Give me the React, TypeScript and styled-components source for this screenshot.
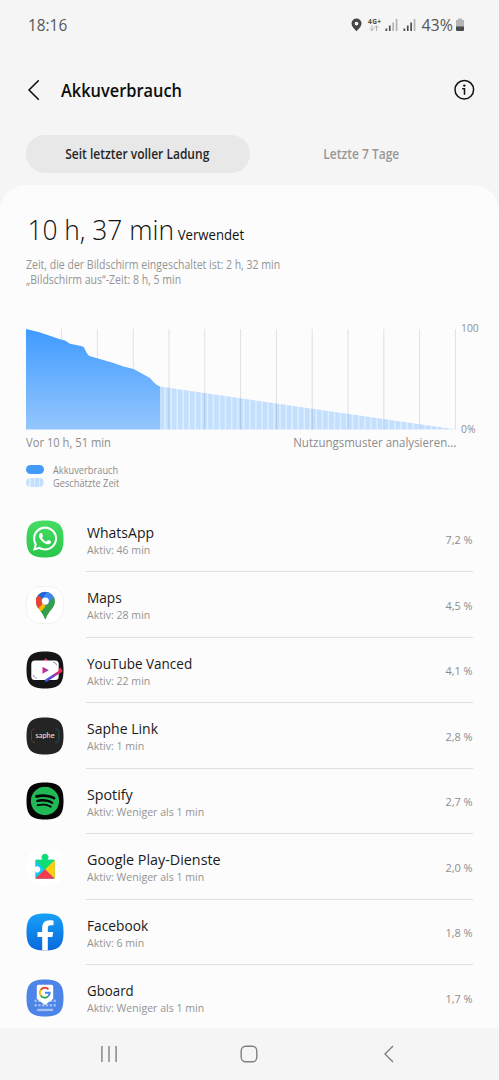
import React from "react";
import styled, { createGlobalStyle, css } from "styled-components";
import { FaSpotify, FaWhatsapp } from "react-icons/fa";

const GlobalStyle = createGlobalStyle`
  * { box-sizing: border-box; }
  body {
    margin: 0;
    background: #f5f5f5;
    font-family: "Open Sans", "Noto Sans", sans-serif;
    color: #1c1c1c;
  }
  svg { display: block; flex: none; }
`;

/* Condenses the typeface horizontally, anchored at the given edge. */
const narrow = (ratio: number, origin = "left") => css`
  transform: scaleX(${ratio});
  transform-origin: ${origin};
`;

const Screen = styled.div`
  width: 499px;
  height: 1080px;
  display: flex;
  flex-direction: column;
  overflow: hidden;
  background: #f5f5f5;
`;

const StatusBar = styled.header`
  height: 49px;
  flex: none;
  display: flex;
  align-items: center;
  justify-content: space-between;
  padding: 0 34px 0 28px;
  font-size: 16px;
  color: #555;
`;

const Clock = styled.span`
  ${narrow(0.96)}
`;

const StatusIcons = styled.div`
  display: flex;
  align-items: center;
`;

const Level = styled.span`
  margin: 0 2px 0 3px;
`;

const TitleBar = styled.div`
  height: 82px;
  flex: none;
  display: flex;
  align-items: center;
  padding: 0 24px 0 27px;
`;

const Title = styled.h1`
  flex: 1;
  margin: -2px 0 0 20px;
  font-size: 18.5px;
  font-weight: 600;
  color: #0c0c0c;
  ${narrow(0.885)}
`;

const Tabs = styled.nav`
  height: 54px;
  flex: none;
  display: flex;
  align-items: flex-start;
  padding: 4px 26px 0;
`;

const Tab = styled.button<{ $active?: boolean }>`
  flex: 1;
  height: 38px;
  border: 0;
  border-radius: 19px;
  padding: 0 1px 0 0;
  font-family: inherit;
  font-size: 13.5px;
  font-weight: 600;
  background: ${(p) => (p.$active ? "#e8e8e8" : "transparent")};
  color: ${(p) => (p.$active ? "#262626" : "#989898")};
`;

const TabLabel = styled.span`
  display: block;
  ${narrow(0.89, "center")}
`;

const Card = styled.main`
  flex: 1;
  min-height: 0;
  overflow: hidden;
  border-radius: 26px 26px 0 0;
  background: #fcfcfc;
  padding: 24px 26px 0;
`;

const Total = styled.div`
  display: flex;
  align-items: baseline;
  height: 43px;
  padding-left: 1.5px;
  line-height: 40px;
  font-size: 28px;
  font-weight: 300;
  color: #101010;
  ${narrow(0.94)}
`;

const Used = styled.span`
  margin-left: 4px;
  font-size: 14px;
  font-weight: 400;
`;

const Details = styled.p`
  margin: 5px 0 1px;
  font-size: 12px;
  line-height: 15px;
  white-space: nowrap;
  color: #949494;
  ${narrow(0.876)}
`;

const ChartRow = styled.div`
  display: flex;
  margin-top: 42px;
`;

const Axis = styled.div`
  display: flex;
  flex-direction: column;
  justify-content: space-between;
  height: 117px;
  margin: -9px 0 -7px 5px;
  font-size: 11.5px;
  line-height: 16px;
  color: #8f8f8f;
  ${narrow(0.9)}
`;

const RangeLabels = styled.div`
  display: flex;
  justify-content: space-between;
  width: 430px;
  margin-top: 4px;
  font-size: 12.5px;
  line-height: 18px;
  color: #8c8c8c;
`;

const RangeStart = styled.span`
  ${narrow(0.895)}
`;

const RangeEnd = styled.span`
  ${narrow(0.92, "right")}
`;

const Legend = styled.div`
  display: flex;
  flex-direction: column;
  margin-top: 11px;
`;

const LegendItem = styled.div`
  display: flex;
  align-items: center;
  gap: 9px;
  height: 13px;
`;

const LegendLabel = styled.span`
  font-size: 10px;
  color: #8c8c8c;
  ${narrow(0.925)}
`;

const Swatch = styled.i<{ $estimated?: boolean }>`
  width: 17.5px;
  height: 9px;
  border-radius: 4.5px;
  background: ${(p) =>
    p.$estimated
      ? "repeating-linear-gradient(90deg, #c3dfff 0 3.4px, #deeeff 3.4px 4.6px)"
      : "#429bfa"};
`;

const AppList = styled.ul`
  list-style: none;
  margin: 17.5px 0 0;
  padding: 0;
`;

const AppRow = styled.li`
  display: flex;
  align-items: center;
  height: 65.5px;
`;

const AppBody = styled.div`
  flex: 1;
  align-self: stretch;
  display: flex;
  align-items: center;
  justify-content: space-between;
  margin-left: 22px;
  padding: 2px 0 0 0.6px;
  border-bottom: 1px solid #dfdfdf;
`;

const AppName = styled.div<{ $ratio: number }>`
  font-size: 15px;
  line-height: 19px;
  color: #1a1a1a;
  ${(p) => narrow(p.$ratio)}
`;

const AppTime = styled.div`
  font-size: 11.5px;
  line-height: 15px;
  color: #949494;
  ${narrow(0.92)}
`;

const Share = styled.div`
  font-size: 11.5px;
  color: #8c8c8c;
  ${narrow(0.95, "right")}
`;

const NavBar = styled.footer`
  height: 52px;
  flex: none;
  display: grid;
  grid-template-columns: repeat(3, 140px);
  justify-content: center;
  align-items: center;
  justify-items: center;
  padding-right: 2px;
  background: #f5f5f5;
`;

const Signal = ({ bars }: { bars: number }) => (
  <svg width="18" height="14" viewBox="0 0 18 14">
    {[2.5, 5.5, 8.5, 12].map((h, i) => (
      <rect key={h} x={3.5 + i * 3.4} y={13 - h} width="1.7" height={h} fill={i < bars ? "#4c4c4c" : "#b4b4b4"} />
    ))}
  </svg>
);

const SQUIRCLE = "M18.5 0C32.5 0 37 4.5 37 18.5S32.5 37 18.5 37 0 32.5 0 18.5 4.5 0 18.5 0Z";

const Tile = ({ fill, stroke, children }: { fill: string; stroke?: string; children?: React.ReactNode }) => (
  <svg width="38" height="38" viewBox="-0.5 -0.5 38 38">
    <path d={SQUIRCLE} fill={fill} stroke={stroke} strokeWidth="0.8" />
    {children}
  </svg>
);

const WhatsAppIcon = () => (
  <Tile fill="url(#wa)">
    <defs>
      <linearGradient id="wa" x2="0" y2="1">
        <stop stopColor="#46dd63" />
        <stop offset="1" stopColor="#29c64c" />
      </linearGradient>
    </defs>
    <FaWhatsapp x="4.8" y="4.4" size={27.5} color="#fff" />
  </Tile>
);

const MapsIcon = () => (
  <Tile fill="#fff" stroke="#eeeeee">
    <clipPath id="pin">
      <path d="M18.8 5.3a9.4 9.4 0 0 1 9.4 9.4c0 4.8-2.6 7.2-5.2 10.5-1.8 2.4-2.9 4.2-3.4 6.6-.3 1.3-1.3 1.3-1.6 0-.5-2.4-1.6-4.2-3.4-6.6-2.6-3.3-5.2-5.7-5.2-10.5a9.4 9.4 0 0 1 9.4-9.4Z" />
    </clipPath>
    <g clipPath="url(#pin)">
      <path fill="#34a04c" d="M8 4h22v30H8z" />
      <path fill="#fbbc04" d="M8 19.5 18.8 14.5 22 17.3 12.8 27.5 8 25z" />
      <path fill="#e94335" d="M8 6 12.2 8.5 18.8 14.5 11.2 22.5 8 20z" />
      <path fill="#2068da" d="M11.2 8.6 16 3H22.3L18.8 14.5z" />
      <path fill="#4285f4" d="M21.6 4 30 4 27.4 11 18.8 20.5 16 12z" />
      <path fill="#34a04c" d="M27.2 10.8 30 10V30H12L14 25.5z" />
    </g>
    <circle cx="18.8" cy="14.6" r="3.6" fill="#fff" />
  </Tile>
);

const VancedIcon = () => (
  <Tile fill="#151518">
    <defs>
      <linearGradient id="vancedPen" x1="0" x2="1" y1="1" y2="0">
        <stop stopColor="#3c5be8" />
        <stop offset=".45" stopColor="#6d3fd0" />
        <stop offset=".75" stopColor="#f0265a" />
      </linearGradient>
      <linearGradient id="vancedPlay">
        <stop stopColor="#e0267c" />
        <stop offset="1" stopColor="#6b45c9" />
      </linearGradient>
    </defs>
    <path d="M16.8 9.2 19.2 6.4l2.6 2.8z" fill="#e5254f" />
    <rect x="4.8" y="9" width="27.4" height="19.6" rx="3.6" fill="#fff" />
    <path d="M16 15.2v7l6.3-3.5z" fill="url(#vancedPlay)" />
    <path d="M6.8 23.4c.4 1.8 1.6 2.8 3.4 3.2M26.5 10.8c2 .2 3.3 1.2 3.6 3.1" fill="none" stroke="#6b559e" strokeWidth=".7" />
    <path d="M18.8 29.6 34.6 19.4 32.8 16.6" fill="none" stroke="url(#vancedPen)" strokeWidth="2.6" strokeLinejoin="round" />
  </Tile>
);

const BrandText = styled.text`
  font: 400 7.4px Lato, sans-serif;
  fill: #f2f2f2;
`;

const SapheIcon = () => (
  <Tile fill="#242424">
    <path d="M8.5 11.6C5.5 11.6 5 12.5 5 15v6.5c0 2.5.5 3.4 3.5 3.4" fill="none" stroke="#793c45" strokeWidth=".7" />
    <path d="M28.8 11.6c3 0 3.5.9 3.5 3.4v6.5c0 2.5-.5 3.4-3.5 3.4" fill="none" stroke="#2b6570" strokeWidth=".7" />
    <BrandText x="18.6" y="20.4" textAnchor="middle">saphe</BrandText>
  </Tile>
);

const SpotifyIcon = () => (
  <Tile fill="#050505">
    <FaSpotify x="3.9" y="3.9" size={29.2} color="#20b955" />
  </Tile>
);

const PlayServicesIcon = () => (
  <Tile fill="#fff">
    <clipPath id="puzzle">
      <path d="M10 11.2h6.4a3.2 3.2 0 1 1 4.2 0h6.5a1.2 1.2 0 0 1 1.2 1.2v16.6a1.2 1.2 0 0 1-1.2 1.2H10a1.2 1.2 0 0 1-1.2-1.2v-5.6a3.1 3.1 0 1 0 0-5v-6a1.2 1.2 0 0 1 1.2-1.2Z" />
    </clipPath>
    <g clipPath="url(#puzzle)">
      <path fill="#16c6f2" d="M8 4h21v27H8z" />
      <path fill="#10dc74" d="M8 4h21v7.5L18.5 21.3 8 11z" />
      <path fill="#ffcd09" d="M29 10.8v20L18.5 21z" />
      <path fill="#f33b4d" d="M8 31 18.5 20.8 29 31z" />
    </g>
  </Tile>
);

const FacebookIcon = () => (
  <Tile fill="url(#fb)">
    <defs>
      <linearGradient id="fb" x2="0" y2="1">
        <stop stopColor="#18a1f8" />
        <stop offset="1" stopColor="#0868dc" />
      </linearGradient>
    </defs>
    <path fill="#fff" d="M15.7 37V23.6H11v-5.2h4.7v-3.9c0-5 2.8-7.7 7.3-7.7 1.8 0 3.5.2 4 .3v4.7h-2.8c-2.2 0-2.9 1.2-2.9 2.9v3.7h5.4l-.8 5.2h-4.6V37z" />
  </Tile>
);

const GboardIcon = () => (
  <Tile fill="#4d84e8">
    <g fill="#a5c2f5">
      {[20.2, 24.6].map((y) =>
        [8, 11.8, 15.6, 19.4, 23.2, 27].map((x) => <rect key={`${x}-${y}`} x={x} y={y} width="2.3" height="2.3" />)
      )}
      <rect x="10.7" y="29.3" width="15.8" height="2.3" />
    </g>
    <path d="M12 5.2h13a1.7 1.7 0 0 1 1.7 1.7v12.3L18.5 25.6 10.3 19.2V6.9A1.7 1.7 0 0 1 12 5.2Z" fill="#fff" />
    <g fill="none" strokeWidth="1.9">
      <path d="M14.2 10.6A5 5 0 0 1 22 9.8" stroke="#ea4335" />
      <path d="M14.2 10.6a5 5 0 0 0 0 5.4" stroke="#fbbc04" />
      <path d="M14.2 16a5 5 0 0 0 7.5.9" stroke="#34a853" />
      <path d="M18.5 13.3h4.7a5 5 0 0 1-1.5 3.6" stroke="#4285f4" />
    </g>
  </Tile>
);

const apps = [
  { name: "WhatsApp", ratio: 0.935, time: "46 min", share: "7,2 %", Icon: WhatsAppIcon },
  { name: "Maps", ratio: 0.91, time: "28 min", share: "4,5 %", Icon: MapsIcon },
  { name: "YouTube Vanced", ratio: 0.9, time: "22 min", share: "4,1 %", Icon: VancedIcon },
  { name: "Saphe Link", ratio: 0.935, time: "1 min", share: "2,8 %", Icon: SapheIcon },
  { name: "Spotify", ratio: 0.95, time: "Weniger als 1 min", share: "2,7 %", Icon: SpotifyIcon },
  { name: "Google Play-Dienste", ratio: 0.955, time: "Weniger als 1 min", share: "2,0 %", Icon: PlayServicesIcon },
  { name: "Facebook", ratio: 0.915, time: "6 min", share: "1,8 %", Icon: FacebookIcon },
  { name: "Gboard", ratio: 0.885, time: "Weniger als 1 min", share: "1,7 %", Icon: GboardIcon },
];

const BatteryChart = () => (
  <svg width="430" height="101" viewBox="0 0 430 101">
    <defs>
      <linearGradient id="used" x2="0" y2="1">
        <stop stopColor="#3f9bff" />
        <stop offset="1" stopColor="#95c6fe" />
      </linearGradient>
      <pattern id="stripes" x="133.8" width="6.05" height="100" patternUnits="userSpaceOnUse">
        <rect width="6.05" height="100" fill="#def0ff" />
        <rect width="4.6" height="100" fill="#c4dffe" />
      </pattern>
    </defs>
    <path d="M134 57.5 430 100.5H134z" fill="url(#stripes)" />
    {Array.from({ length: 12 }, (_, i) => (
      <rect key={i} x={(i + 1) * 35.8 - 0.7} y="0" width="1" height="100.5" fill="#000" opacity=".11" />
    ))}
    <path
      d="M0 0 12.5 3 27.5 8Q34 10.5 39 11.5L44 14.8 54 16.7Q58 17.3 58.5 19.5Q61 25.5 63.5 27L87.5 34 97.5 37.5 107.5 40 114 43.5 124 49 128 53.5Q131 56.5 134 57.5V100.5H0z"
      fill="url(#used)"
    />
  </svg>
);

export default function App() {
  return (
    <Screen>
      <GlobalStyle />
      <StatusBar>
        <Clock>18:16</Clock>
        <StatusIcons>
          <svg width="11" height="14" viewBox="0 0 11 14">
            <path fillRule="evenodd" fill="#454545" d="M5.5.5a5 5 0 0 1 5 5c0 3-2.5 5-5 7.8C3 10.5.5 8.5.5 5.5a5 5 0 0 1 5-5Zm0 3.2a1.9 1.9 0 1 0 0 3.8 1.9 1.9 0 0 0 0-3.8Z" />
          </svg>
          <svg width="20" height="14" viewBox="0 0 20 14">
            <text x="6" y="6" fontSize="6.5" fontWeight="700" fill="#4c4c4c" textLength="13">4G+</text>
            <path d="M10 7.5v5M8 10.5l2 2 2-2M14.5 12.8v-5M12.5 9.8l2-2 2 2" fill="none" stroke="#aaa" strokeWidth=".9" />
          </svg>
          <Signal bars={2} />
          <Signal bars={3} />
          <Level>43%</Level>
          <svg width="10" height="14" viewBox="0 0 10 14">
            <path d="M3 .5h4V2h2v7H1V2h2z" fill="#b5b5b5" />
            <path d="M1 8.5h8V12a1 1 0 0 1-1 1H2a1 1 0 0 1-1-1z" fill="#4c4c4c" />
          </svg>
        </StatusIcons>
      </StatusBar>
      <TitleBar>
        <svg width="14" height="22" viewBox="0 0 14 22">
          <path d="M11.3 1.8 2 11l9.3 9.3" fill="none" stroke="#111" strokeWidth="1.6" strokeLinecap="round" strokeLinejoin="round" />
        </svg>
        <Title>Akkuverbrauch</Title>
        <svg width="22" height="22" viewBox="0 0 22 22">
          <circle cx="11.3" cy="10.7" r="9.3" fill="none" stroke="#111" strokeWidth="1.5" />
          <circle cx="11.3" cy="6.6" r="1.2" fill="#111" />
          <path d="M9.2 9.8h2.3v6" fill="none" stroke="#111" strokeWidth="1.5" />
        </svg>
      </TitleBar>
      <Tabs>
        <Tab $active>
          <TabLabel>Seit letzter voller Ladung</TabLabel>
        </Tab>
        <Tab>
          <TabLabel>Letzte 7 Tage</TabLabel>
        </Tab>
      </Tabs>
      <Card>
        <Total>
          10 h, 37 min<Used>Verwendet</Used>
        </Total>
        <Details>
          Zeit, die der Bildschirm eingeschaltet ist: 2 h, 32 min
          <br />
          „Bildschirm aus“-Zeit: 8 h, 5 min
        </Details>
        <ChartRow>
          <BatteryChart />
          <Axis>
            <span>100</span>
            <span>0%</span>
          </Axis>
        </ChartRow>
        <RangeLabels>
          <RangeStart>Vor 10 h, 51 min</RangeStart>
          <RangeEnd>Nutzungsmuster analysieren...</RangeEnd>
        </RangeLabels>
        <Legend>
          <LegendItem>
            <Swatch />
            <LegendLabel>Akkuverbrauch</LegendLabel>
          </LegendItem>
          <LegendItem>
            <Swatch $estimated />
            <LegendLabel>Geschätzte Zeit</LegendLabel>
          </LegendItem>
        </Legend>
        <AppList>
          {apps.map(({ name, ratio, time, share, Icon }) => (
            <AppRow key={name}>
              <Icon />
              <AppBody>
                <div>
                  <AppName $ratio={ratio}>{name}</AppName>
                  <AppTime>Aktiv: {time}</AppTime>
                </div>
                <Share>{share}</Share>
              </AppBody>
            </AppRow>
          ))}
        </AppList>
      </Card>
      <NavBar>
        <svg width="18" height="18" viewBox="0 0 18 18">
          <path d="M1.9 1v16M9 1v16M16.1 1v16" stroke="#808080" strokeWidth="1.4" />
        </svg>
        <svg width="18" height="18" viewBox="0 0 18 18">
          <rect x="1.2" y="1.2" width="15.6" height="15.6" rx="4.5" fill="none" stroke="#808080" strokeWidth="1.4" />
        </svg>
        <svg width="10" height="18" viewBox="0 0 10 18">
          <path d="M9 1 1 9l8 8" fill="none" stroke="#808080" strokeWidth="1.4" />
        </svg>
      </NavBar>
    </Screen>
  );
}
